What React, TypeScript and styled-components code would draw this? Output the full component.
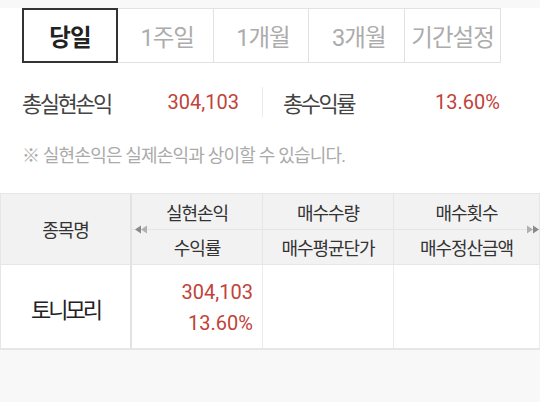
import React from 'react';
import styled, { createGlobalStyle } from 'styled-components';

const GlobalStyle = createGlobalStyle`
  html, body {
    margin: 0;
    padding: 0;
    background: #f8f8f8;
    font-family: Roboto, "Noto Sans CJK KR", sans-serif;
  }
`;

const Page = styled.div`
  width: 540px;
  overflow: hidden;
`;

const Top = styled.div`
  background: #fff;
`;

const TabBar = styled.div`
  display: grid;
  grid-template-columns: repeat(5, 1fr);
  margin: 8px 39px 0 22px;
  height: 55px;
`;

const Tab = styled.div<{ $active?: boolean }>`
  display: flex;
  align-items: center;
  justify-content: center;
  margin-left: -1px;
  padding-left: ${p => (p.$active ? '0' : '4px')};
  border: ${p => (p.$active ? '2px solid #333' : '1px solid #e2e2e2')};
  position: relative;
  z-index: ${p => (p.$active ? 1 : 0)};
  font-size: 23.5px;
  letter-spacing: -1px;
  font-weight: ${p => (p.$active ? 700 : 400)};
  color: ${p => (p.$active ? '#222' : '#acacac')};
  &:first-child {
    margin-left: 0;
  }
  &:last-child {
    padding-left: 0;
  }
`;

const Summary = styled.div`
  display: flex;
  align-items: center;
  margin: 24px 40px 0 22px;
  height: 30px;
`;

const SummaryCell = styled.div<{ $side: 'left' | 'right' }>`
  flex: 1;
  display: flex;
  justify-content: space-between;
  align-items: center;
  padding: ${p => (p.$side === 'left' ? '0 23px 0 0' : '0 0 0 20px')};
`;

const Divider = styled.div`
  width: 1px;
  height: 30px;
  background: #ebebeb;
`;

const Label = styled.span`
  font-size: 22px;
  letter-spacing: -2.5px;
  color: #444;
`;

const Value = styled.span`
  font-size: 20px;
  color: #c1433a;
`;

const Notice = styled.div`
  margin: 24px 0 0 22px;
  font-size: 18px;
  letter-spacing: -0.8px;
  color: #aaa;
  height: 52px;
`;

const Table = styled.div`
  position: relative;
  display: grid;
  grid-template-columns: 131px 131px 131px 1fr;
  grid-template-rows: 36px 35px 83px;
  background: #fff;
  border-top: 1px solid #e6e6e6;
  border-left: 1px solid #e6e6e6;
  border-bottom: 2px solid #e6e6e6;
`;

const HeadCell = styled.div<{ $rows?: number; $first?: boolean; $top?: boolean }>`
  grid-row: span ${p => p.$rows || 1};
  display: flex;
  align-items: center;
  justify-content: center;
  background: #f2f2f2;
  font-size: 18px;
  letter-spacing: -1.1px;
  color: #333;
  border-right: ${p => (p.$first ? '2px solid #e2e2e2' : '1px solid #e6e6e6')};
  border-bottom: ${p => (p.$top ? '1px solid #e4e4e4' : '1px solid #e6e6e6')};
`;

const Cell = styled.div<{ $first?: boolean }>`
  display: flex;
  flex-direction: column;
  align-items: ${p => (p.$first ? 'center' : 'flex-end')};
  justify-content: center;
  padding-right: ${p => (p.$first ? '0' : '9px')};
  padding-top: 2px;
  border-right: ${p => (p.$first ? '2px solid #e2e2e2' : '1px solid #ececec')};
  font-size: 22px;
  letter-spacing: ${p => (p.$first ? '-3px' : '0')};
  color: #222;
`;

const Num = styled.span`
  color: #c1433a;
  font-size: 20px;
  letter-spacing: 0;
  line-height: 31px;
`;

const Arrow = styled.div<{ $side: 'left' | 'right' }>`
  position: absolute;
  top: 31px;
  ${p => (p.$side === 'left' ? 'left: 134px;' : 'right: 1px;')}
  display: flex;
`;

const Bottom = styled.div`
  height: 60px;
`;

const DoubleArrow = ({ dir }: { dir: 'left' | 'right' }) => (
  <svg width="12" height="9" viewBox="0 0 12 9">
    {dir === 'left' ? (
      <g>
        <polygon points="0,4.5 6,0.5 6,8.5" fill="#8a8a8a" />
        <polygon points="6,4.5 12,0.5 12,8.5" fill="#b0b0b0" />
      </g>
    ) : (
      <g>
        <polygon points="0,0.5 6,4.5 0,8.5" fill="#b0b0b0" />
        <polygon points="6,0.5 12,4.5 6,8.5" fill="#8a8a8a" />
      </g>
    )}
  </svg>
);

const tabs = ['당일', '1주일', '1개월', '3개월', '기간설정'];

export default function App() {
  return (
    <Page>
      <GlobalStyle />
      <Top>
        <TabBar>
          {tabs.map((t, i) => (
            <Tab key={t} $active={i === 0}>{t}</Tab>
          ))}
        </TabBar>

        <Summary>
          <SummaryCell $side="left">
            <Label>총실현손익</Label>
            <Value>304,103</Value>
          </SummaryCell>
          <Divider />
          <SummaryCell $side="right">
            <Label>총수익률</Label>
            <Value>13.60%</Value>
          </SummaryCell>
        </Summary>

        <Notice>※ 실현손익은 실제손익과 상이할 수 있습니다.</Notice>

        <Table>
          <HeadCell $rows={2} $first>종목명</HeadCell>
          <HeadCell $top>실현손익</HeadCell>
          <HeadCell $top>매수수량</HeadCell>
          <HeadCell $top>매수횟수</HeadCell>
          <HeadCell>수익률</HeadCell>
          <HeadCell>매수평균단가</HeadCell>
          <HeadCell>매수정산금액</HeadCell>

          <Cell $first>토니모리</Cell>
          <Cell>
            <Num>304,103</Num>
            <Num>13.60%</Num>
          </Cell>
          <Cell />
          <Cell />

          <Arrow $side="left"><DoubleArrow dir="left" /></Arrow>
          <Arrow $side="right"><DoubleArrow dir="right" /></Arrow>
        </Table>
      </Top>
      <Bottom />
    </Page>
  );
}
